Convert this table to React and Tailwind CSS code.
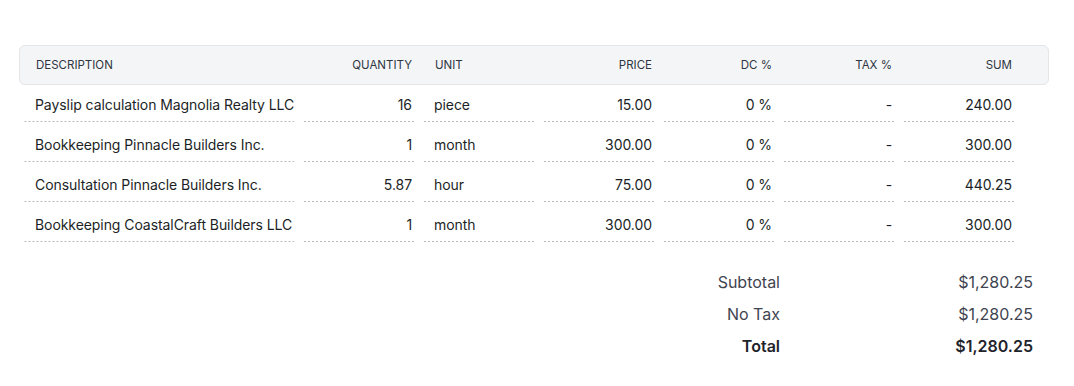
const columns = [
  { key: "desc", label: "Description", align: "left" },
  { key: "qty", label: "Quantity", align: "right" },
  { key: "unit", label: "Unit", align: "left" },
  { key: "price", label: "Price", align: "right" },
  { key: "dc", label: "DC %", align: "right" },
  { key: "tax", label: "Tax %", align: "right" },
  { key: "sum", label: "Sum", align: "right" },
];

const items = [
  { desc: "Payslip calculation Magnolia Realty LLC", qty: "16", unit: "piece", price: "15.00", dc: "0 %", tax: "-", sum: "240.00" },
  { desc: "Bookkeeping Pinnacle Builders Inc.", qty: "1", unit: "month", price: "300.00", dc: "0 %", tax: "-", sum: "300.00" },
  { desc: "Consultation Pinnacle Builders Inc.", qty: "5.87", unit: "hour", price: "75.00", dc: "0 %", tax: "-", sum: "440.25" },
  { desc: "Bookkeeping CoastalCraft Builders LLC", qty: "1", unit: "month", price: "300.00", dc: "0 %", tax: "-", sum: "300.00" },
];

const grid = "grid grid-cols-[271px_112px_112px_112px_112px_112px_112px] gap-x-2";

function Cell({ align, children, head }) {
  if (head) {
    return <div className={align === "left" ? "pl-3 text-left" : "pr-[2px] text-right"}>{children}</div>;
  }
  return (
    <div
      className={`h-[35px] flex items-center whitespace-nowrap ${align === "left" ? "justify-start pl-3" : "justify-end pr-[2px]"} bg-[linear-gradient(to_right,#b9bcc0_50%,transparent_50%)] bg-[length:4px_1px] bg-bottom bg-repeat-x`}
    >
      {children}
    </div>
  );
}

export default function App() {
  return (
    <div className="bg-white min-h-[386px] pt-[45px] pl-[19px] font-['Inter',sans-serif]">
      <div className="w-[1030px]">
        <div className="h-10 rounded-md border border-[#e4e6e9] bg-[#f4f5f7] flex items-center pl-[3px] pt-px">
          <div className={`${grid} w-full text-[11.5px] uppercase text-[#2f3542]`}>
            {columns.map((c) => (
              <Cell key={c.key} align={c.align} head>
                <span className={c.align === "left" ? "pl-px" : ""}>{c.label}</span>
              </Cell>
            ))}
          </div>
        </div>

        <div className="pt-[2px] pl-1 text-[14px] text-[#1c1f26] tracking-[-0.005em]">
          {items.map((it, i) => (
            <div key={i} className={`${grid} h-10`}>
              {columns.map((c) => (
                <Cell key={c.key} align={c.align}>
                  {it[c.key]}
                </Cell>
              ))}
            </div>
          ))}
        </div>
      </div>

      <div className="mt-[19px] ml-auto mr-[41px] w-[400px] text-[16px] text-[#3f4450]">
        <div className="flex h-8 items-center">
          <div className="flex-1 text-right">Subtotal</div>
          <div className="w-[253px] text-right">$1,280.25</div>
        </div>
        <div className="flex h-8 items-center">
          <div className="flex-1 text-right">No Tax</div>
          <div className="w-[253px] text-right">$1,280.25</div>
        </div>
        <div className="flex h-8 items-center font-semibold text-[#1f232b]">
          <div className="flex-1 text-right">Total</div>
          <div className="w-[253px] text-right">$1,280.25</div>
        </div>
      </div>
    </div>
  );
}
